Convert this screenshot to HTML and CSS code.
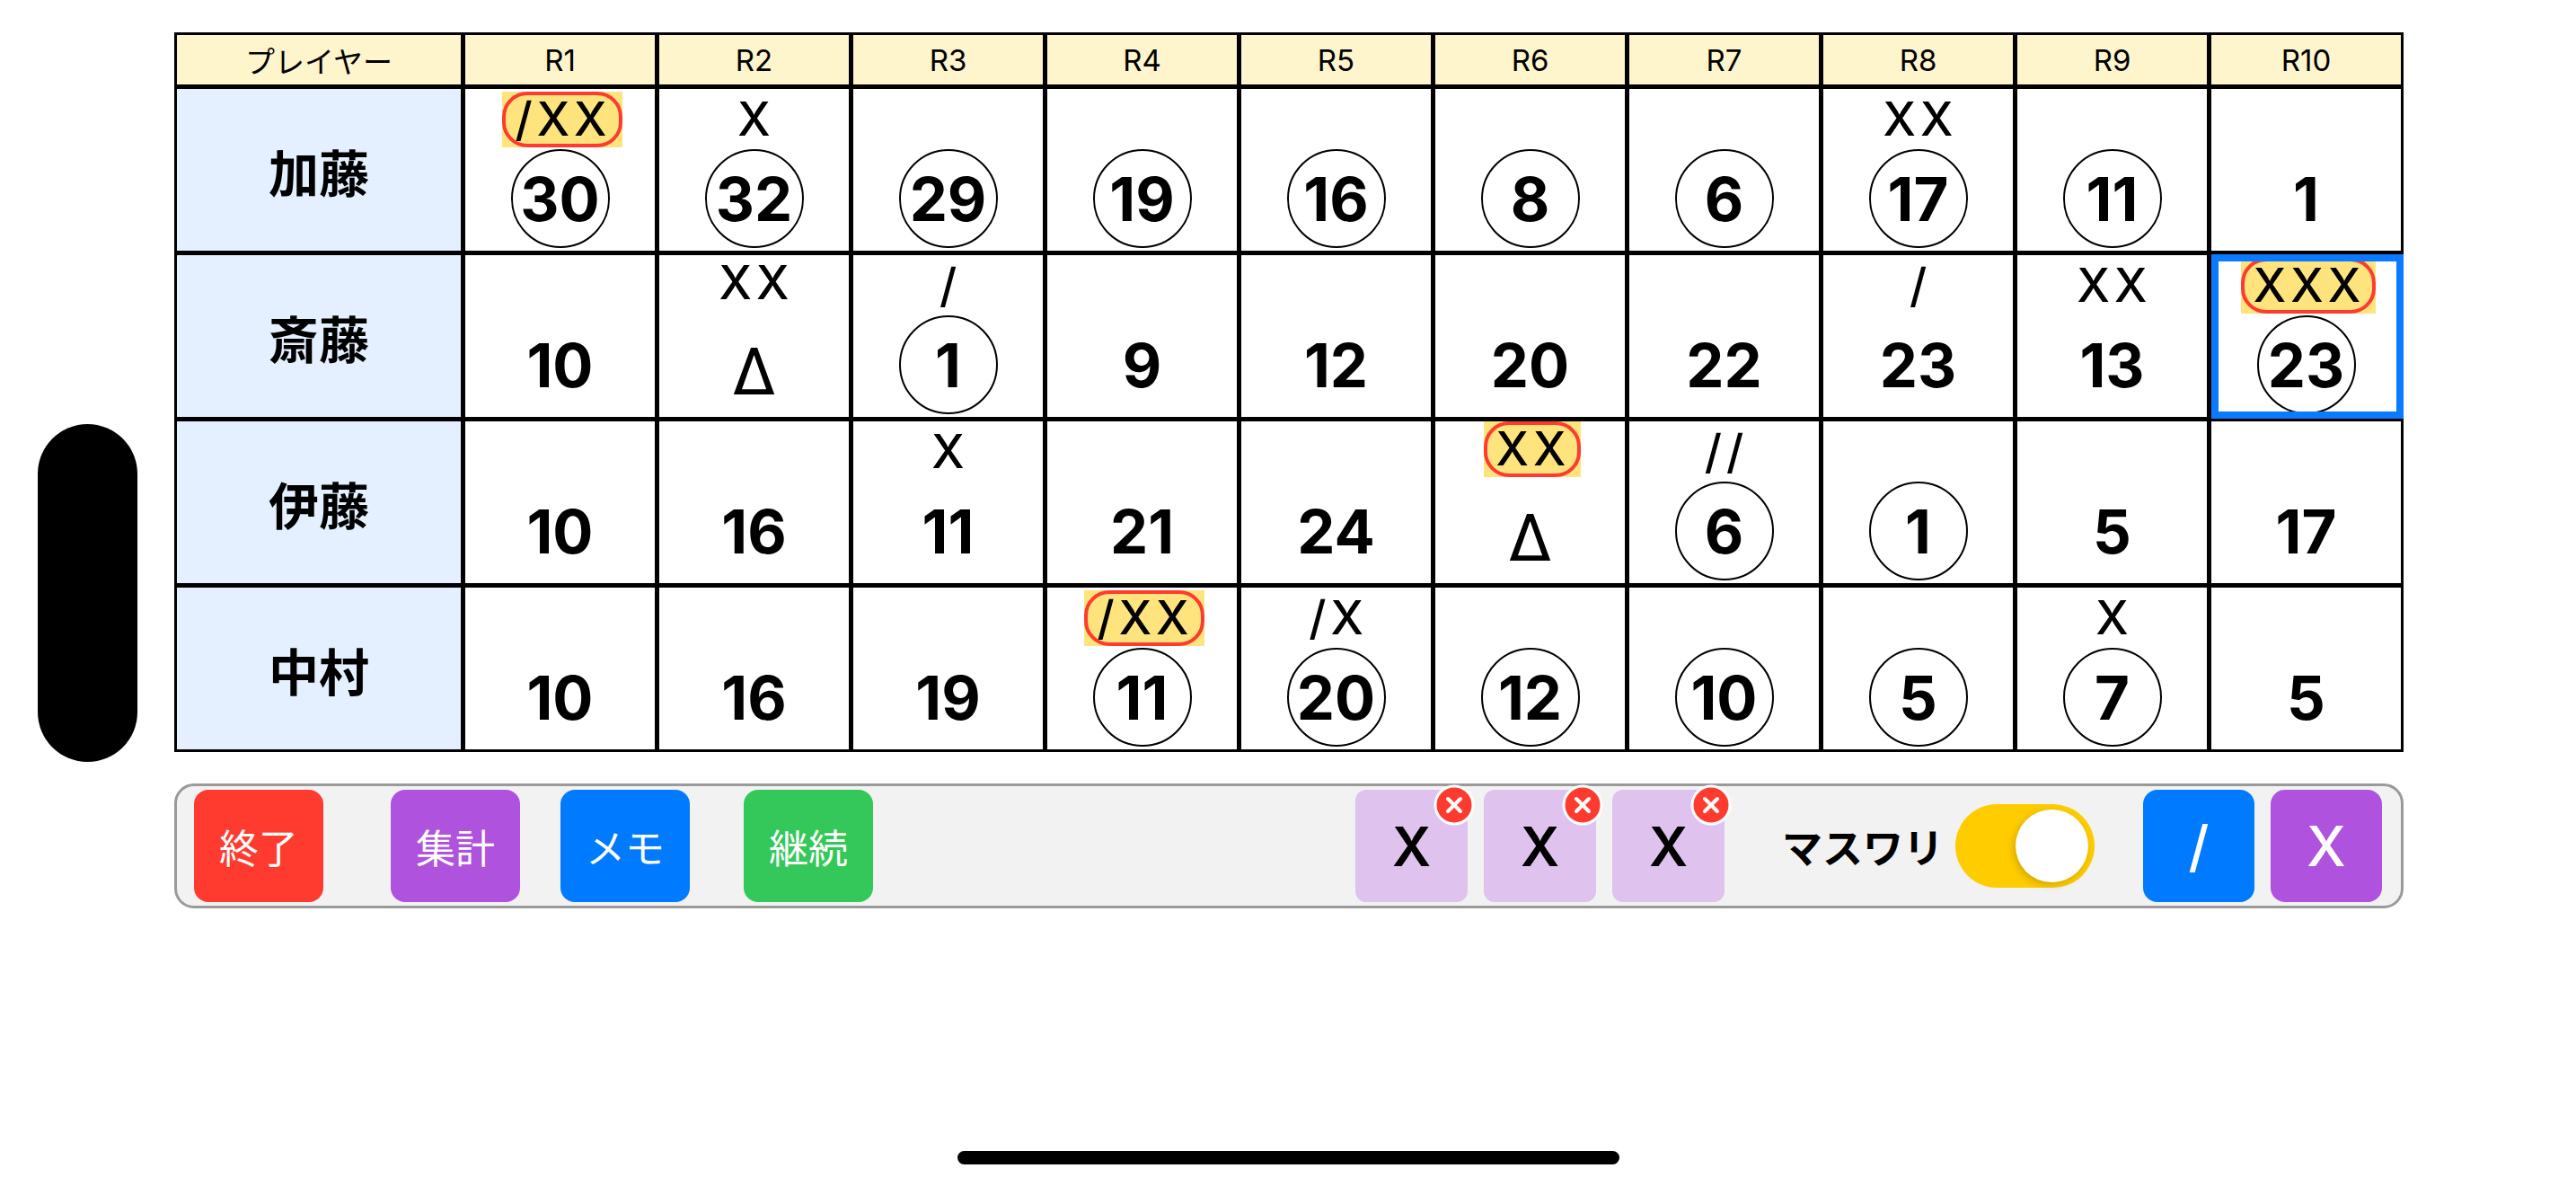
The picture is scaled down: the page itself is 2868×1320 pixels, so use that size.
FILE: index.html
```html
<!DOCTYPE html>
<html lang="ja">
<head>
  <meta charset="UTF-8">
  <meta name="viewport" content="width=device-width, initial-scale=1.0">
  <title>スコアボード</title>
  <link rel="stylesheet" href="styles.css">
</head>
<body>
  <div class="screen">
    <div class="island-col"><div class="island"></div></div>

    <main class="main">
      <div class="board">
        <div class="cell head">プレイヤー</div>
        <div class="cell head">R1</div>
        <div class="cell head">R2</div>
        <div class="cell head">R3</div>
        <div class="cell head">R4</div>
        <div class="cell head">R5</div>
        <div class="cell head">R6</div>
        <div class="cell head">R7</div>
        <div class="cell head">R8</div>
        <div class="cell head">R9</div>
        <div class="cell head">R10</div>

        <!-- 加藤 -->
        <div class="cell name">加藤</div>
        <div class="cell score"><div class="mark"><span class="hl">/XX</span></div><div class="num ring">30</div></div>
        <div class="cell score"><div class="mark">X</div><div class="num ring">32</div></div>
        <div class="cell score"><div class="mark"></div><div class="num ring">29</div></div>
        <div class="cell score"><div class="mark"></div><div class="num ring">19</div></div>
        <div class="cell score"><div class="mark"></div><div class="num ring">16</div></div>
        <div class="cell score"><div class="mark"></div><div class="num ring">8</div></div>
        <div class="cell score"><div class="mark"></div><div class="num ring">6</div></div>
        <div class="cell score"><div class="mark">XX</div><div class="num ring">17</div></div>
        <div class="cell score"><div class="mark"></div><div class="num ring">11</div></div>
        <div class="cell score"><div class="mark"></div><div class="num">1</div></div>

        <!-- 斎藤 -->
        <div class="cell name">斎藤</div>
        <div class="cell score"><div class="mark"></div><div class="num">10</div></div>
        <div class="cell score tri"><div class="mark">XX</div><div class="num delta">Δ</div></div>
        <div class="cell score"><div class="mark">/</div><div class="num ring">1</div></div>
        <div class="cell score"><div class="mark"></div><div class="num">9</div></div>
        <div class="cell score"><div class="mark"></div><div class="num">12</div></div>
        <div class="cell score"><div class="mark"></div><div class="num">20</div></div>
        <div class="cell score"><div class="mark"></div><div class="num">22</div></div>
        <div class="cell score"><div class="mark">/</div><div class="num">23</div></div>
        <div class="cell score"><div class="mark">XX</div><div class="num">13</div></div>
        <div class="cell score selected"><div class="mark"><span class="hl">XXX</span></div><div class="num ring">23</div></div>

        <!-- 伊藤 -->
        <div class="cell name">伊藤</div>
        <div class="cell score"><div class="mark"></div><div class="num">10</div></div>
        <div class="cell score"><div class="mark"></div><div class="num">16</div></div>
        <div class="cell score"><div class="mark">X</div><div class="num">11</div></div>
        <div class="cell score"><div class="mark"></div><div class="num">21</div></div>
        <div class="cell score"><div class="mark"></div><div class="num">24</div></div>
        <div class="cell score tri"><div class="mark"><span class="hl">XX</span></div><div class="num delta">Δ</div></div>
        <div class="cell score"><div class="mark">//</div><div class="num ring">6</div></div>
        <div class="cell score"><div class="mark"></div><div class="num ring">1</div></div>
        <div class="cell score"><div class="mark"></div><div class="num">5</div></div>
        <div class="cell score"><div class="mark"></div><div class="num">17</div></div>

        <!-- 中村 -->
        <div class="cell name">中村</div>
        <div class="cell score"><div class="mark"></div><div class="num">10</div></div>
        <div class="cell score"><div class="mark"></div><div class="num">16</div></div>
        <div class="cell score"><div class="mark"></div><div class="num">19</div></div>
        <div class="cell score"><div class="mark"><span class="hl">/XX</span></div><div class="num ring">11</div></div>
        <div class="cell score"><div class="mark">/X</div><div class="num ring">20</div></div>
        <div class="cell score"><div class="mark"></div><div class="num ring">12</div></div>
        <div class="cell score"><div class="mark"></div><div class="num ring">10</div></div>
        <div class="cell score"><div class="mark"></div><div class="num ring">5</div></div>
        <div class="cell score"><div class="mark">X</div><div class="num ring">7</div></div>
        <div class="cell score"><div class="mark"></div><div class="num">5</div></div>
      </div>

      <div class="toolbar">
        <div class="btn red">終了</div>
        <div class="btn purple gap-75">集計</div>
        <div class="btn blue gap-45">メモ</div>
        <div class="btn green gap-60">継続</div>

        <div class="spacer"></div>

        <div class="tile">X<svg class="badge" viewBox="0 0 46 46"><circle cx="23" cy="23" r="21" fill="#ff3b30" stroke="#fff" stroke-width="3"/><path d="M16 16 L30 30 M30 16 L16 30" stroke="#fff" stroke-width="4" stroke-linecap="round"/></svg></div>
        <div class="tile">X<svg class="badge" viewBox="0 0 46 46"><circle cx="23" cy="23" r="21" fill="#ff3b30" stroke="#fff" stroke-width="3"/><path d="M16 16 L30 30 M30 16 L16 30" stroke="#fff" stroke-width="4" stroke-linecap="round"/></svg></div>
        <div class="tile">X<svg class="badge" viewBox="0 0 46 46"><circle cx="23" cy="23" r="21" fill="#ff3b30" stroke="#fff" stroke-width="3"/><path d="M16 16 L30 30 M30 16 L16 30" stroke="#fff" stroke-width="4" stroke-linecap="round"/></svg></div>

        <span class="toggle-label">マスワリ</span>
        <div class="toggle on"><div class="knob"></div></div>

        <div class="btn key blue">/</div>
        <div class="btn key purple">X</div>
      </div>
    </main>

    <div class="home-bar"></div>
  </div>
</body>
</html>
```

FILE: styles.css
```css
body {
  margin: 0;
  background: #fff;
  font-family: "Inter", "Noto Sans CJK JP", sans-serif;
  color: #000;
}
.screen {
  position: relative;
  width: 2868px;
  height: 1320px;
  display: flex;
  overflow: hidden;
}
.island-col {
  width: 194px;
  padding-left: 42px;
  box-sizing: border-box;
  display: flex;
  align-items: center;
}
.island {
  width: 111px;
  height: 376px;
  background: #000;
  border-radius: 56px;
}
.main {
  width: 2482px;
  padding-top: 36px;
}

/* score grid */
.board {
  display: grid;
  grid-template-columns: 316px repeat(10, 211px);
  grid-template-rows: 55px repeat(4, 180px);
  gap: 5px;
  padding: 3px;
  background: #000;
}
.cell {
  background: #fff;
  display: flex;
}
.head {
  background: #fff5cc;
  font-size: 33px;
  align-items: center;
  justify-content: center;
}
.name {
  background: #e4f0ff;
  font-size: 56px;
  font-weight: 700;
  align-items: center;
  justify-content: center;
}
.score {
  position: relative;
  flex-direction: column;
  align-items: center;
  padding-top: 3px;
  box-sizing: border-box;
}
.mark {
  height: 62px;
  display: flex;
  align-items: center;
  font-size: 52px;
  line-height: 62px;
  font-weight: 500;
  letter-spacing: 5px;
  padding-left: 5px;
}
.hl {
  position: relative;
  background: #ffe47e;
  padding: 0 12px 0 14px;
}
.hl::after {
  content: '';
  position: absolute;
  inset: 0;
  border: 4px solid #ff3b30;
  border-radius: 28px;
}
.num {
  margin-top: 2px;
  width: 110px;
  height: 110px;
  box-sizing: border-box;
  display: flex;
  align-items: center;
  justify-content: center;
  font-size: 67px;
  line-height: 1;
  font-weight: 700;
}
.ring {
  border: 2px solid #000;
  border-radius: 50%;
}
.tri {
  padding-top: 0;
}
.tri .num {
  margin-top: 15px;
}
.delta {
  font-size: 72px;
  font-weight: 400;
}
.selected::after {
  content: '';
  position: absolute;
  top: -1px;
  right: -3px;
  bottom: -2px;
  left: 0;
  border: 8px solid #0a7aff;
}

/* bottom toolbar */
.toolbar {
  margin-top: 35px;
  height: 139px;
  box-sizing: border-box;
  border: 3px solid #9a9a9a;
  border-radius: 22px;
  background: #f2f2f2;
  display: flex;
  align-items: center;
  padding: 0 21px 0 19px;
}
.btn {
  width: 144px;
  height: 125px;
  border-radius: 16px;
  color: #fff;
  font-size: 44px;
  display: flex;
  align-items: center;
  justify-content: center;
}
.red { background: #ff3b30; }
.purple { background: #af52de; }
.blue { background: #007aff; }
.green { background: #34c759; }
.gap-75 { margin-left: 75px; }
.gap-45 { margin-left: 45px; }
.gap-60 { margin-left: 60px; }
.spacer { flex: 1; }

.tile {
  position: relative;
  width: 125px;
  height: 125px;
  border-radius: 12px;
  background: #dfc3ee;
  font-size: 60px;
  font-weight: 600;
  display: flex;
  align-items: center;
  justify-content: center;
}
.tile + .tile { margin-left: 18px; }
.badge {
  position: absolute;
  top: -6px;
  right: -8px;
  width: 46px;
  height: 46px;
}
.toggle-label {
  margin-left: 64px;
  font-size: 45px;
  font-weight: 700;
}
.toggle {
  margin-left: 13px;
  width: 155px;
  height: 93px;
  border-radius: 47px;
  background: #e5e5ea;
  position: relative;
}
.toggle.on { background: #ffcc00; }
.knob {
  position: absolute;
  top: 6px;
  right: 7px;
  width: 81px;
  height: 81px;
  border-radius: 50%;
  background: #fff;
  box-shadow: -2px 3px 8px rgba(0, 0, 0, 0.18);
}
.key {
  width: 124px;
  font-size: 62px;
  font-weight: 500;
}
.key.blue { margin-left: 54px; }
.key.purple { margin-left: 18px; }

.home-bar {
  position: absolute;
  left: 50%;
  bottom: 24px;
  width: 737px;
  height: 15px;
  margin-left: -368px;
  border-radius: 8px;
  background: #000;
}
```
